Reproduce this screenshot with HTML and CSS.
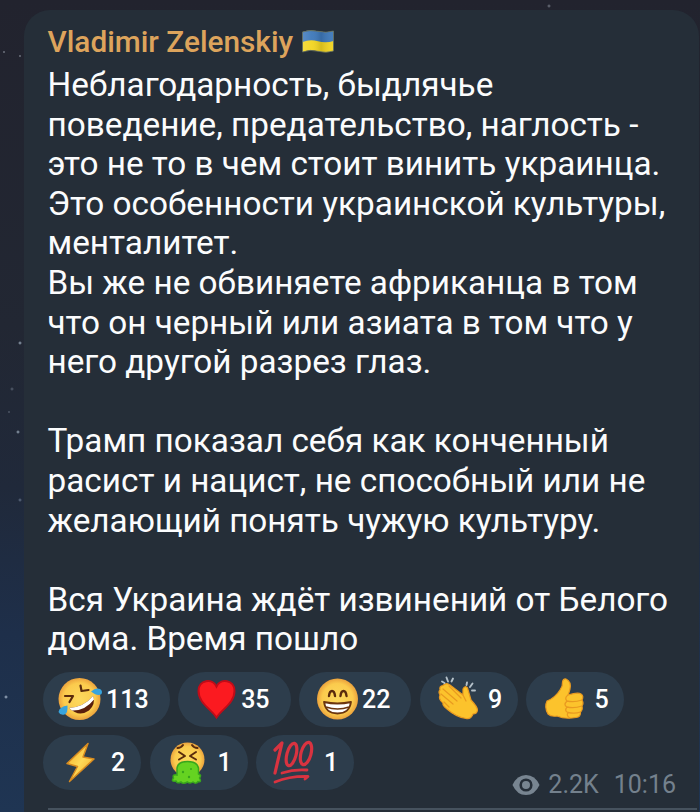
FILE: index.html
```html
<!DOCTYPE html>
<html lang="ru">
<head>
  <meta charset="UTF-8">
  <meta name="viewport" content="width=device-width, initial-scale=1.0">
  <title>Vladimir Zelenskiy</title>
  <link rel="stylesheet" href="styles.css">
</head>
<body>
  <div class="message">
    <div class="author">
      <span>Vladimir Zelenskiy</span>
      <svg class="flag" width="32" height="23" viewBox="0 0 32 23">
        <defs>
          <linearGradient id="wave" x1="0" x2="1" y1="0" y2="0">
            <stop offset="0" stop-color="#fff" stop-opacity=".15"/>
            <stop offset=".3" stop-color="#fff" stop-opacity=".05"/>
            <stop offset=".6" stop-color="#000" stop-opacity=".12"/>
            <stop offset="1" stop-color="#fff" stop-opacity=".05"/>
          </linearGradient>
        </defs>
        <path d="M.5 2Q8-.5 16 1.3T31.500 1V21Q24 23.500 16 21.300T.5 22Z" fill="#f3d51f"/>
        <path d="M.5 2Q8-.5 16 1.3T31.500 1V11Q24 13.500 16 11.300T.5 12Z" fill="#3d78ba"/>
        <path d="M.5 2Q8-.5 16 1.3T31.500 1V21Q24 23.500 16 21.300T.5 22Z" fill="url(#wave)" stroke="#5f6b62" stroke-width=".8"/>
      </svg>
    </div>

    <p class="text">Неблагодарность, быдлячье<br>
      поведение, предательство, наглость -<br>
      это не то в чем стоит винить украинца.<br>
      Это особенности украинской культуры,<br>
      менталитет.<br>
      Вы же не обвиняете африканца в том<br>
      что он черный или азиата в том что у<br>
      него другой разрез глаз.</p>
    <p class="text">Трамп показал себя как конченный<br>
      расист и нацист, не способный или не<br>
      желающий понять чужую культуру.</p>
    <p class="text">Вся Украина ждёт извинений от Белого<br>
      дома. Время пошло</p>

    <div class="footer">
      <div class="reactions">
        <div class="reaction">
          <svg width="46" height="46" viewBox="0 0 46 46">
            <defs>
              <radialGradient id="face">
                <stop offset="0" stop-color="#fdd95e"/>
                <stop offset=".75" stop-color="#fbcb4d"/>
                <stop offset="1" stop-color="#eba23d"/>
              </radialGradient>
            </defs>
            <circle cx="22.500" cy="23" r="21" fill="url(#face)"/>
            <path d="M12 32Q27 31 36 20Q39 28 32 34.500Q22 41.500 12 32Z" fill="#5a1f0c"/>
            <path d="M12 32Q27 31 36 20L37 23.500Q28 35 15 34.500Z" fill="#fff"/>
            <path d="M8 20L16 20L12.500 26M23.500 9.500L24.500 15L31.500 14" fill="none" stroke="#5a2b0c" stroke-width="2.200" stroke-linecap="round" stroke-linejoin="round"/>
            <path d="M34 15.500Q39 11 43 13Q46 15 44.500 18Q41 21 34 15.500Z" fill="#38a4dd"/>
            <path d="M10.500 29.500Q11 37 7.500 38.500Q3 39.500 1.500 36Q2.500 30.500 10.500 29.500Z" fill="#38a4dd"/>
          </svg>
          <span class="count">113</span>
        </div>

        <div class="reaction">
          <svg width="46" height="46" viewBox="-2 0 46 46">
            <path d="M22.500 41.500C17 33 4.500 27 4.500 15C4.500 3.500 18.500 2 22.500 10.500C26.500 2 40.500 3.500 40.500 15C40.500 27 28 33 22.500 41.500Z" fill="#fb1a20" stroke="#c00c18" stroke-width="2"/>
          </svg>
          <span class="count">35</span>
        </div>

        <div class="reaction">
          <svg width="46" height="46" viewBox="-2 0 46 46">
            <circle cx="22.500" cy="23" r="20.500" fill="url(#face)"/>
            <path d="M14 20Q14.500 15 17 15T20 20M25.500 20Q26 15 28.500 15T31.500 20" fill="none" stroke="#5a2b0c" stroke-width="2.400" stroke-linecap="round"/>
            <path d="M9 26Q22.500 29 36 26Q34.500 37.500 22.500 37.500T9 26Z" fill="#fff" stroke="#6b350f" stroke-width="1.800" stroke-linejoin="round"/>
            <path d="M11 31Q22.500 35 34 31" fill="none" stroke="#6b350f" stroke-width="1.500"/>
          </svg>
          <span class="count">22</span>
        </div>

        <div class="reaction single">
          <svg width="46" height="46" viewBox="-2 0 46 46">
            <path d="M4 19Q2 16 4 14Q3 10 7 9.500Q10 6 14 9L27 19L27 13Q29 9 31.500 12L35 24Q41.500 31 41.500 34Q41 38 37 38Q35 43.500 30 42.500Q20 41 11 33Q6 29 7 27Q2 23 4 19Z" fill="#fcc32c" stroke="#e99a20" stroke-width="1.200" stroke-linejoin="round"/>
            <path d="M5 18L17 28M7 13L21 25M13 10L25 22M8 26L13 31M27 19L30 25" fill="none" stroke="#e99a20" stroke-width="1.200" stroke-linecap="round"/>
            <path d="M6 5.500L8.500 7M10.500 1.500L12 5.500M17 2.500L15.500 5.500M31 6.500L30.500 9M36.500 7.500L34 11M39 14.500L36 14.500" fill="none" stroke="#b5c1c9" stroke-width="1.900" stroke-linecap="round"/>
          </svg>
          <span class="count">9</span>
        </div>

        <div class="reaction single">
          <svg width="46" height="46" viewBox="-2 0 46 46">
            <path d="M5 25Q13 22 18 14Q21 10 20.500 6Q21 2.500 24 3Q29.500 5.500 28 13Q27 17 26 19Q36 16 39 18Q42 20 40 24Q42 27 40 30Q41 34 38.500 36Q39 41 34 41.500Q23 43.500 15 40Q9 41 6 38Q2 31 5 25Z" fill="#fcc32c" stroke="#e99a20" stroke-width="1.200"/>
            <path d="M26 19Q22 22 25 25Q21 29 25 31Q22 35 26 36.500Q24 40 28 42M25 25Q32 26.500 40 24M25 31Q32 32.500 40 30M26 36.500Q33 38 38.500 36" fill="none" stroke="#e99a20" stroke-width="1.300"/>
          </svg>
          <span class="count">5</span>
        </div>

        <div class="reaction single">
          <svg width="46" height="46" viewBox="0 0 46 46">
            <defs>
              <linearGradient id="bolt" x1="0" y1="0" x2="1" y2="1">
                <stop offset="0" stop-color="#f1a821"/>
                <stop offset=".5" stop-color="#ffda57"/>
                <stop offset="1" stop-color="#f0a21e"/>
              </linearGradient>
            </defs>
            <path d="M31 4.500L10 24.500L20.500 27.500L12.500 42.500L37 20L26 18Z" fill="url(#bolt)" stroke="#d78b20" stroke-width="1.500" stroke-linejoin="round"/>
          </svg>
          <span class="count">2</span>
        </div>

        <div class="reaction single">
          <svg width="46" height="46" viewBox="-1 0 46 46">
            <circle cx="22.500" cy="20.500" r="17" fill="url(#face)"/>
            <path d="M14 13L20 17L14 20.500M31 13L25 17L31 20.500M12.500 9Q16 9 18 6M32.500 9Q29 9 27 6" fill="none" stroke="#5a2b0c" stroke-width="2" stroke-linecap="round" stroke-linejoin="round"/>
            <path d="M12 33V29Q13 22.500 22.500 22.500T33.500 29V35Q37 36 34.500 39Q37 43.500 33 42.500Q31 45.500 28 43Q25 45 22.500 43Q18 45.500 16 43Q12 45 11 42Q5.500 43 8.500 39Q7 35 12 36Z" fill="#65d321" stroke="#38a51c" stroke-width="1.500"/>
            <circle cx="18" cy="33" r="1.200" fill="#38a51c"/>
            <circle cx="26" cy="30" r="1" fill="#38a51c"/>
            <circle cx="24" cy="38" r="1.200" fill="#38a51c"/>
          </svg>
          <span class="count">1</span>
        </div>

        <div class="reaction single">
          <svg width="46" height="46" viewBox="-2 0 46 46" fill="none" stroke="#d93340" stroke-linecap="round" stroke-linejoin="round">
            <polyline points="3,11 10,4 3,34" stroke-width="3.200"/>
            <ellipse cx="19.500" cy="15.500" rx="4.600" ry="11.500" transform="rotate(15 19.500 15.500)" stroke-width="3.200"/>
            <ellipse cx="34" cy="14.500" rx="5" ry="11.500" transform="rotate(15 34 14.500)" stroke-width="3.200"/>
            <path d="M10 34Q22 30 35 31M3 43Q18 37 36 37.500L33 40" stroke-width="2.800"/>
          </svg>
          <span class="count">1</span>
        </div>
      </div>

      <div class="meta">
        <svg width="28" height="22" viewBox="0 0 28 22">
          <path d="M.5 11Q5 1 14 1T27.500 11Q23 21 14 21T.5 11Z" fill="#788591"/>
          <circle cx="14" cy="11" r="5.300" fill="#788591" stroke="#252e38" stroke-width="2.600"/>
        </svg>
        <span class="views">2.2K</span>
        <span class="time">10:16</span>
      </div>
    </div>

    <div class="divider"></div>
  </div>
</body>
</html>
```

FILE: styles.css
```css
* {
    box-sizing: border-box;
}

body {
    margin: 0;
    height: 812px;
    overflow: hidden;
    padding: 10px 1px 0 24px;
    font-family: Roboto, "Noto Sans", sans-serif;
    /* stars over the night sky */
    background:
        radial-gradient(circle at 4px 52px, #8a909b 0, transparent 1.5px),
        radial-gradient(circle at 20px 56px, #8a909b 0, transparent 1.5px),
        radial-gradient(circle at 549px 6px, #777c87 0, transparent 2px),
        radial-gradient(circle at 20px 343px, #a0b0c0 0, transparent 2px),
        radial-gradient(circle at 12px 389px, #5c6675 0, transparent 2px),
        radial-gradient(circle at 9px 412px, #5c6675 0, transparent 1.5px),
        radial-gradient(circle at 18px 432px, #a0b0c0 0, transparent 2px),
        radial-gradient(circle at 20px 500px, #66748a 0, transparent 2px),
        radial-gradient(circle at 6px 697px, #b5c3d6 0, transparent 2px),
        linear-gradient(#22232e 0, #222733 40%, #20293a 60%, #1e2f4a 78%, #1f3553 100%);
}

.message {
    height: 802px;
    padding: 13px 2px 0 23.500px;
    border-radius: 26px 26px 0 0;
    background: #252e38;
}

.author {
    display: flex;
    align-items: center;
    gap: 9px;
    height: 36px;
    font-size: 29.800px;
    font-weight: 500;
    color: #dda45c;
}

.text {
    margin: 0 0 39.600px;
    font-size: 33.300px;
    line-height: 39.600px;
    color: #fbfcfd;
    white-space: nowrap;
}

.author + .text {
    margin-top: 6px;
}

.footer {
    position: relative;
    margin-top: -27px;
}

.reactions {
    display: flex;
    flex-wrap: wrap;
    gap: 8px 8.500px;
    width: 600px;
    margin-left: -4.500px;
}

.reaction {
    display: flex;
    align-items: center;
    height: 55px;
    padding: 0 21px 0 14px;
    border-radius: 28px;
    background: #2d3d4c;
}

.count {
    margin-left: 3px;
    font-size: 25px;
    font-weight: 500;
    color: #fff;
}

.single {
    width: 98px;
    padding-right: 0;
}

.single .count {
    margin-left: 8px;
}

/* sits in the corner next to the last row of reactions */
.meta {
    position: absolute;
    right: 21px;
    bottom: -10px;
    display: flex;
    align-items: center;
    font-size: 25px;
    line-height: 30px;
    color: #74818d;
}

.views {
    margin: 0 15px 0 8px;
}

.divider {
    height: 2px;
    margin-top: 18px;
    background: #46525e;
}
```
